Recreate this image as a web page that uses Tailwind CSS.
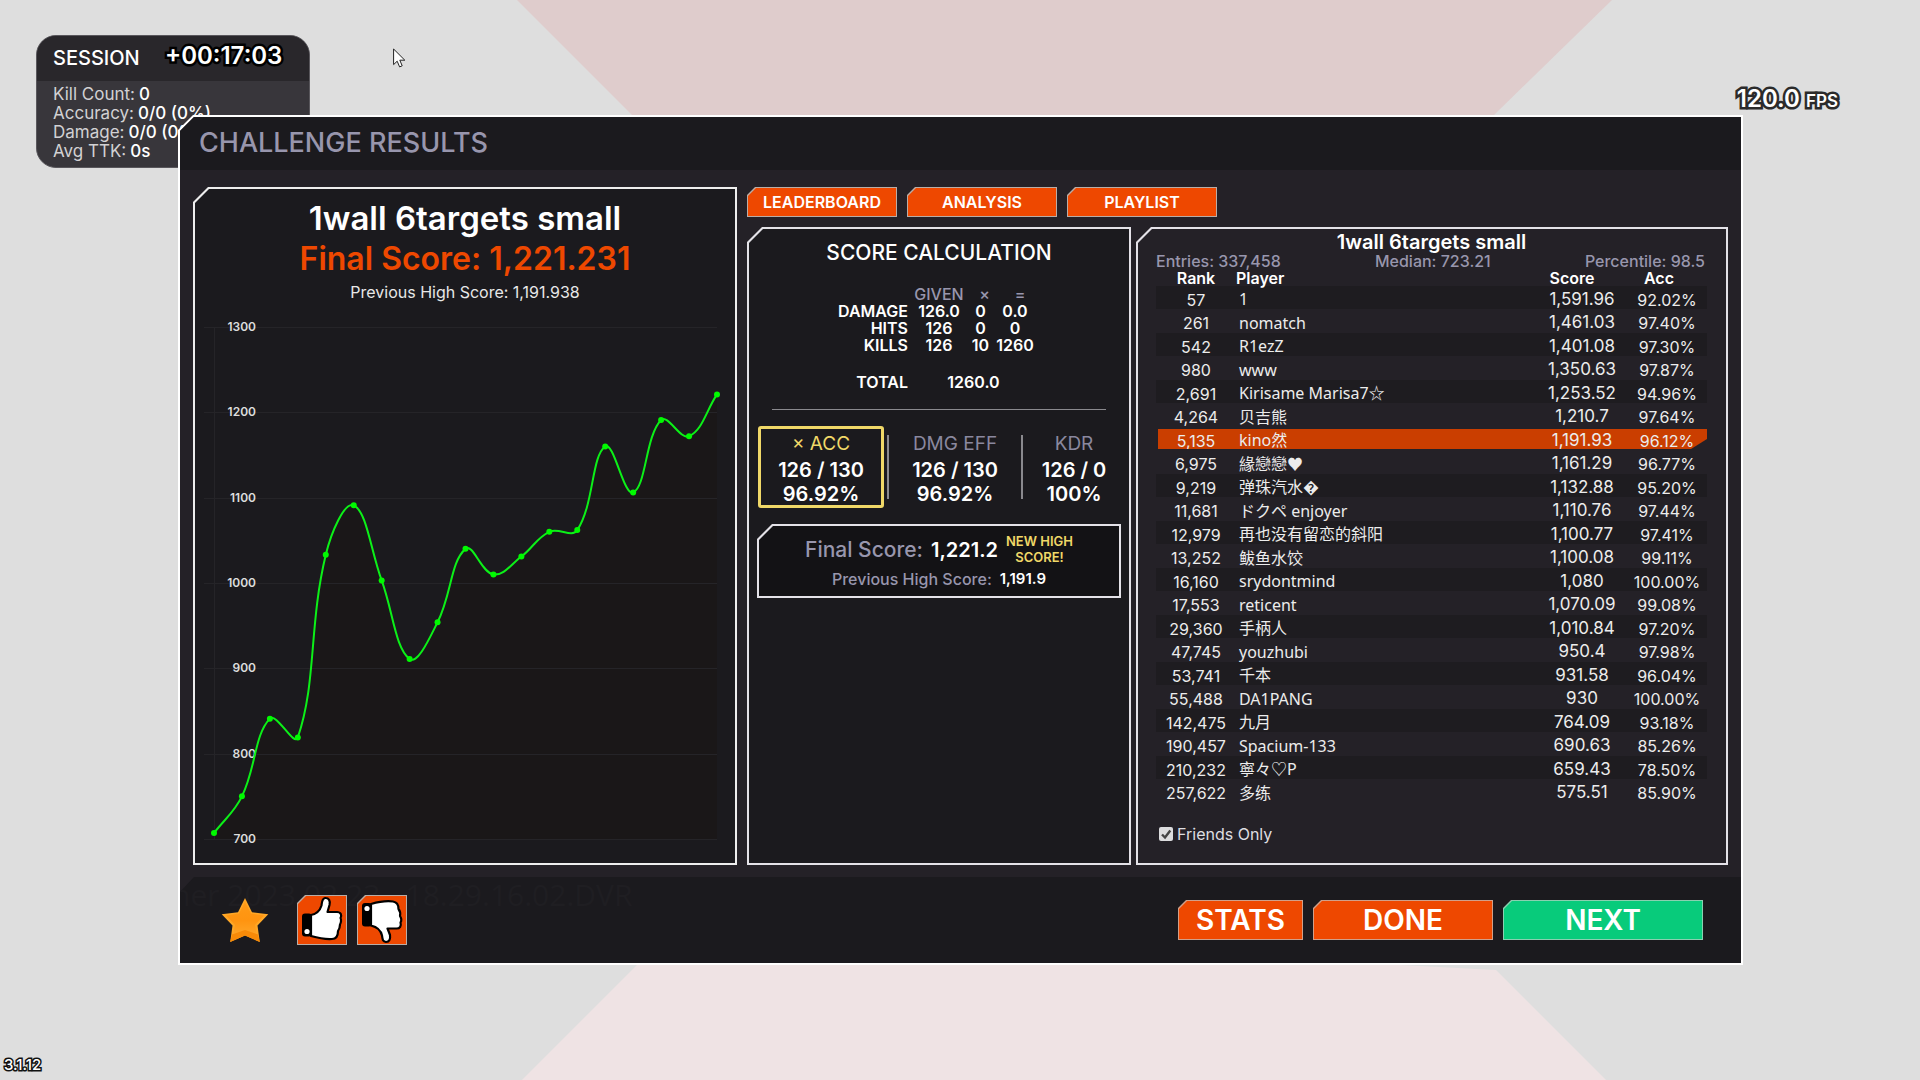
<!DOCTYPE html>
<html lang="en">
<head>
<meta charset="utf-8">
<title>Challenge Results</title>
<script src="https://cdn.jsdelivr.net/npm/@tailwindcss/browser@4"></script>
</head>
<body class="relative min-h-screen overflow-hidden bg-[#dedede] font-['Inter','Noto_Sans_CJK_SC',sans-serif] text-white">

<!-- arena backdrop -->
<svg class="absolute inset-0 h-full w-full" viewBox="0 0 1920 1080" preserveAspectRatio="none" aria-hidden="true">
  <path d="M517 0H1612L1494 115V200H632V115Z" fill="#dfcccc"/>
  <path d="M637 965V900H1400V965L1496 970L1606 1080H522Z" fill="#efe3e4"/>
</svg>

<!-- session HUD -->
<section class="absolute left-9 top-[35px] h-[133px] w-[274px] overflow-hidden rounded-[20px] border border-[#59575c] bg-[#38363b]">
  <header class="flex h-[45px] items-center bg-[#29272b] pb-0.5 pl-4">
    <h2 class="w-[112px] text-[20px] font-medium leading-6">SESSION</h2>
    <time class="pb-1 text-[24px] font-semibold leading-6 [-webkit-text-stroke:5px_#000] [paint-order:stroke_fill]">+00:17:03</time>
  </header>
  <dl class="pl-4 pt-1 text-[17px] leading-[19px] text-[#d2d1d3]">
    <div class="flex gap-1"><dt>Kill Count:</dt><dd class="font-medium text-white">0</dd></div>
    <div class="flex gap-1"><dt>Accuracy:</dt><dd class="font-medium text-white">0/0 (0%)</dd></div>
    <div class="flex gap-1"><dt>Damage:</dt><dd class="font-medium text-white">0/0 (0%)</dd></div>
    <div class="flex gap-1"><dt>Avg TTK:</dt><dd class="font-medium text-white">0s</dd></div>
  </dl>
</section>

<!-- mouse pointer -->
<svg class="absolute left-[393px] top-12 h-5 w-[13px]" viewBox="0 0 13 20" aria-hidden="true">
  <path d="M.6 1V16.6L4.2 13.2L6.6 18.9L9.2 17.8L6.8 12.2H11.8Z" fill="#fff" stroke="#222" stroke-width="1"/>
</svg>

<p class="absolute right-[82px] top-[87px] text-[24px] font-semibold leading-6 [-webkit-text-stroke:5px_#2b2b2b] [paint-order:stroke_fill]">120.0 <span class="text-[17px]">FPS</span></p>
<p class="absolute bottom-[5px] left-1 text-[15px] font-medium leading-5 [-webkit-text-stroke:3px_#111] [paint-order:stroke_fill]">3.1.12</p>

<!-- results dialog -->
<div class="relative pl-[178px] pr-[177px] pt-[115px]">
<main class="bg-white p-0.5 [clip-path:polygon(15px_0,100%_0,100%_100%,0_100%,0_15px)]">
<div class="bg-[#242127] [clip-path:polygon(14px_0,100%_0,100%_100%,0_100%,0_14px)]">
  <header class="flex h-[53px] items-center bg-[#1b1a1e] pb-px pl-[19px]">
    <h1 class="text-[27px] font-medium leading-[30px] text-[#9896ad]">CHALLENGE RESULTS</h1>
  </header>

  <div class="grid grid-cols-[544fr_981fr] gap-2.5 px-[13px] pb-3 pt-[17px]">

    <!-- score history -->
    <section class="bg-[#eeeeee] p-0.5 [clip-path:polygon(15px_0,100%_0,100%_100%,0_100%,0_15px)]">
      <div class="h-full bg-[#1b1a1e] pt-[9px] text-center [clip-path:polygon(14px_0,100%_0,100%_100%,0_100%,0_14px)]">
        <h2 class="text-[33px] font-semibold leading-10">1wall 6targets small</h2>
        <p class="text-[32px] font-semibold leading-[42px] text-[#ee4800]">Final Score: 1,221.231</p>
        <p class="text-[16px] leading-6 text-[#e8e8e8]">Previous High Score: 1,191.938</p>
        <svg id="chart" class="block w-full" viewBox="0 0 540 559" role="img" aria-label="Score history"></svg>
      </div>
    </section>

    <div class="flex flex-col gap-2.5">
      <nav class="flex gap-2.5">
        <button class="h-[30px] w-[150px] bg-[#b9ada6] p-px [clip-path:polygon(8px_0,100%_0,100%_100%,0_100%,0_8px)]"><span class="flex h-full items-center justify-center bg-[#ee4800] text-[16px] font-semibold [clip-path:polygon(8px_0,100%_0,100%_100%,0_100%,0_8px)]">LEADERBOARD</span></button>
        <button class="h-[30px] w-[150px] bg-[#b9ada6] p-px [clip-path:polygon(8px_0,100%_0,100%_100%,0_100%,0_8px)]"><span class="flex h-full items-center justify-center bg-[#ee4800] text-[16px] font-semibold [clip-path:polygon(8px_0,100%_0,100%_100%,0_100%,0_8px)]">ANALYSIS</span></button>
        <button class="h-[30px] w-[150px] bg-[#b9ada6] p-px [clip-path:polygon(8px_0,100%_0,100%_100%,0_100%,0_8px)]"><span class="flex h-full items-center justify-center bg-[#ee4800] text-[16px] font-semibold [clip-path:polygon(8px_0,100%_0,100%_100%,0_100%,0_8px)]">PLAYLIST</span></button>
      </nav>

      <div class="grid grow grid-cols-[384fr_592fr] gap-[5px]">

        <!-- score calculation -->
        <section class="bg-[#e4e2e8] p-0.5 [clip-path:polygon(15px_0,100%_0,100%_100%,0_100%,0_15px)]">
          <div class="h-full bg-[#1b1a1e] pt-[11px] [clip-path:polygon(14px_0,100%_0,100%_100%,0_100%,0_14px)]">
            <h2 class="text-center text-[21px] font-medium leading-[26px]">SCORE CALCULATION</h2>
            <table class="ml-[79px] mt-5 table-fixed text-center text-[16px] font-semibold leading-[17px]">
              <colgroup><col class="w-20"><col class="w-[62px]"><col class="w-[21px]"><col class="w-12"></colgroup>
              <thead>
                <tr class="text-[#9896ad]"><td></td><th class="font-medium">GIVEN</th><th class="pl-2 font-medium">×</th><th class="pl-2.5 font-medium">=</th></tr>
              </thead>
              <tbody>
                <tr><th class="text-right font-semibold">DAMAGE</th><td>126.0</td><td>0</td><td>0.0</td></tr>
                <tr><th class="text-right font-semibold">HITS</th><td>126</td><td>0</td><td>0</td></tr>
                <tr><th class="text-right font-semibold">KILLS</th><td>126</td><td>10</td><td>1260</td></tr>
              </tbody>
              <tfoot>
                <tr><th class="pt-5 text-right font-semibold">TOTAL</th><td colspan="3" class="pt-5">1260.0</td></tr>
              </tfoot>
            </table>
            <hr class="mx-[23px] mt-[18px] border-[#8a898e]">

            <div class="mt-4 flex items-center pl-[9px] pr-1 text-center text-[20px] font-semibold leading-6">
              <div class="h-[82px] w-[126px] rounded-[3px] border-[3px] border-[#f0d868] pt-[3px]">
                <h3 class="mb-0.5 text-[19px] font-normal text-[#f0d868]">× ACC</h3><p>126 / 130</p><p>96.92%</p>
              </div>
              <div class="ml-[3px] h-16 w-0.5 bg-[#8a898e]"></div>
              <div class="h-[82px] w-[132px] pt-1.5">
                <h3 class="mb-0.5 text-[19px] font-normal text-[#8a889f]">DMG EFF</h3><p>126 / 130</p><p>96.92%</p>
              </div>
              <div class="h-16 w-0.5 bg-[#8a898e]"></div>
              <div class="h-[82px] grow pt-1.5">
                <h3 class="mb-0.5 text-[19px] font-normal text-[#8a889f]">KDR</h3><p>126 / 0</p><p>100%</p>
              </div>
            </div>

            <div class="mx-2 mt-4 bg-[#e4e2e8] p-0.5 [clip-path:polygon(15px_0,100%_0,100%_100%,0_100%,0_15px)]">
              <div class="bg-[#131215] pb-[7px] pt-[7px] [clip-path:polygon(14px_0,100%_0,100%_100%,0_100%,0_14px)]">
                <div class="flex items-center justify-center gap-2">
                  <span class="text-[21px] font-medium text-[#9896ad]">Final Score:</span>
                  <span class="text-[20px] font-semibold">1,221.2</span>
                  <span class="pb-0.5 text-center text-[13px] font-semibold leading-4 text-[#f0d868]">NEW HIGH<br>SCORE!</span>
                </div>
                <div class="mt-0.5 flex items-center justify-center gap-2 text-[16px] leading-5">
                  <span class="font-medium text-[#9896ad]">Previous High Score:</span>
                  <span class="text-[15px] font-semibold">1,191.9</span>
                </div>
              </div>
            </div>
          </div>
        </section>

        <!-- leaderboard -->
        <section class="bg-[#e4e2e8] p-0.5 [clip-path:polygon(15px_0,100%_0,100%_100%,0_100%,0_15px)]">
          <div class="h-full bg-[#242127] pl-[18px] pr-[19px] [clip-path:polygon(14px_0,100%_0,100%_100%,0_100%,0_14px)]">
            <h2 class="pt-px text-center text-[20px] font-semibold leading-[25px]">1wall 6targets small</h2>
            <div class="flex justify-between pb-[3px] pr-0.5 text-[16px] font-medium leading-[12px] text-[#9896ad]">
              <span>Entries: 337,458</span><span>Median: 723.21</span><span>Percentile: 98.5</span>
            </div>
            <table class="w-full table-fixed text-center text-[16px] leading-[17px] text-[#ececec]">
              <colgroup><col class="w-20"><col><col class="w-[90px]"><col class="w-20"></colgroup>
              <thead>
                <tr class="h-4 leading-4 text-white"><th class="font-semibold">Rank</th><th class="text-left font-semibold">Player</th><th class="pr-5 font-semibold">Score</th><th class="pr-4 font-semibold">Acc</th></tr>
              </thead>
              <tbody id="rows"></tbody>
            </table>
            <label class="mt-[21px] flex items-center gap-1 pb-[18px] pl-[3px] text-[16px] leading-5 text-[#dedee0]">
              <span class="relative h-3.5 w-3.5">
                <input type="checkbox" checked class="peer block h-3.5 w-3.5 appearance-none rounded-[2px] bg-[#dcdcde]">
                <svg class="pointer-events-none absolute inset-0 hidden peer-checked:block" viewBox="0 0 14 14" aria-hidden="true"><path d="M3 7.500L6 10.500L11.300 3.500" fill="none" stroke="#444" stroke-width="2.400"/></svg>
              </span>
              Friends Only
            </label>
          </div>
        </section>
      </div>
    </div>
  </div>

  <footer class="relative flex h-[86px] items-center bg-[#1b1a1e] pl-[41px] pr-[38px] [clip-path:polygon(14px_0,100%_0,100%_100%,0_100%,0_15px)]">
    <p class="absolute -left-2 -top-1 whitespace-nowrap font-['Open_Sans',sans-serif] text-[30px] leading-[44px] text-[#1f1e22]" aria-hidden="true">ner 2023.02.23 - 18.29.16.02.DVR</p>
    <button class="relative h-[46px] w-[48px]" aria-label="Favourite">
      <svg viewBox="0 0 48 46" class="h-full w-full">
        <defs><linearGradient id="gold" x1="0" y1="0" x2="0" y2="1"><stop offset="0" stop-color="#ff9a16"/><stop offset=".5" stop-color="#ff9410"/><stop offset="1" stop-color="#ffa92c"/></linearGradient></defs>
        <path d="M24 1L31 15.200L47.300 17.200L36.500 28.500L38.800 45L24 38.500L9.200 45L11.500 28.500L.7 17.200L17 15.200Z" fill="#ffa726"/>
        <path d="M24 5L30 16.500L43 18.500L34 28L37 42L24 35.500L11 42L14 28L5 18.500L18 16.500Z" fill="url(#gold)"/>
        <path d="M9.200 45L11 37.500L24 33L37 37.500L38.800 45L24 38.500Z" fill="#f88a08"/>
      </svg>
    </button>
    <div class="relative ml-7 flex gap-2.5">
      <button aria-label="Like" class="h-[50px] w-[50px] bg-[#b9ada6] p-px [clip-path:polygon(8px_0,100%_0,100%_100%,0_100%,0_8px)]"><span class="block h-full bg-[#ee4800] [clip-path:polygon(8px_0,100%_0,100%_100%,0_100%,0_8px)]">
        <svg viewBox="0 0 48 48" class="h-12 w-12">
          <path d="M13 19C18 18 22 14.500 23.500 9.500C24 6 24 2.500 27 2C31 1.800 32.500 5 31.500 9L29.500 16H39C43 16 44 19.500 42.500 22C43.500 23.500 43 27 42 28.500C42 31 41 33.500 40 35C40 40 38.500 43 34 43C27 43.500 20 42 13 40Z" fill="#fff" stroke="#000" stroke-width="2.200" stroke-linejoin="round"/>
          <rect x="4" y="17.500" width="10" height="23" rx="3" fill="#000"/><circle cx="9" cy="35.500" r="2.600" fill="#fff"/>
        </svg></span></button>
      <button aria-label="Dislike" class="h-[50px] w-[50px] bg-[#b9ada6] p-px [clip-path:polygon(8px_0,100%_0,100%_100%,0_100%,0_8px)]"><span class="block h-full bg-[#ee4800] [clip-path:polygon(8px_0,100%_0,100%_100%,0_100%,0_8px)]">
        <svg viewBox="0 0 48 48" class="h-12 w-12">
          <path d="M13 8C20 6 28 4.500 35 5.500C38.500 6 40.500 9 40.500 13C42 15 42.500 18 42 20C43.500 22.500 43.500 25 42.500 26.500C43.500 30 42 32.500 38.500 32.500H29.500L32 39C32.500 43 31.500 46 28 46C24.500 45.500 24.500 43 24 39.500C23 35 19 31 13 29.500Z" fill="#fff" stroke="#000" stroke-width="2.200" stroke-linejoin="round"/>
          <rect x="4" y="7" width="10" height="23.500" rx="3" fill="#000"/><circle cx="9" cy="12.500" r="2.600" fill="#fff"/>
        </svg></span></button>
    </div>
    <div class="relative ml-auto flex gap-2.5 text-[28px] font-semibold leading-8">
      <button class="h-10 w-[125px] bg-[#d0a08a] p-px [clip-path:polygon(8px_0,100%_0,100%_100%,0_100%,0_8px)]"><span class="flex h-full items-center justify-center bg-[#ee4800] [clip-path:polygon(8px_0,100%_0,100%_100%,0_100%,0_8px)]">STATS</span></button>
      <button class="h-10 w-[180px] bg-[#d0a08a] p-px [clip-path:polygon(8px_0,100%_0,100%_100%,0_100%,0_8px)]"><span class="flex h-full items-center justify-center bg-[#ee4800] [clip-path:polygon(8px_0,100%_0,100%_100%,0_100%,0_8px)]">DONE</span></button>
      <button class="h-10 w-[200px] bg-[#8ad0b0] p-px [clip-path:polygon(8px_0,100%_0,100%_100%,0_100%,0_8px)]"><span class="flex h-full items-center justify-center bg-[#08cb7b] [clip-path:polygon(8px_0,100%_0,100%_100%,0_100%,0_8px)]">NEXT</span></button>
    </div>
  </footer>
</div>
</main>
</div>

<script>
  const players = [
    ['57','1','1,591.96','92.02%'],['261','nomatch','1,461.03','97.40%'],['542','R1ezZ','1,401.08','97.30%'],
    ['980','www','1,350.63','97.87%'],['2,691','Kirisame Marisa7☆','1,253.52','94.96%'],['4,264','贝吉熊','1,210.7','97.64%'],
    ['5,135','kino然','1,191.93','96.12%'],['6,975','緣戀戀♥','1,161.29','96.77%'],['9,219','弹珠汽水\uFFFD','1,132.88','95.20%'],
    ['11,681','ドクペ enjoyer','1,110.76','97.44%'],['12,979','再也没有留恋的斜阳','1,100.77','97.41%'],['13,252','鲅鱼水饺','1,100.08','99.11%'],
    ['16,160','srydontmind','1,080','100.00%'],['17,553','reticent','1,070.09','99.08%'],['29,360','手柄人','1,010.84','97.20%'],
    ['47,745','youzhubi','950.4','97.98%'],['53,741','千本','931.58','96.04%'],['55,488','DA1PANG','930','100.00%'],
    ['142,475','九月','764.09','93.18%'],['190,457','Spacium-133','690.63','85.26%'],['210,232','寧々♡P','659.43','78.50%'],
    ['257,622','多练','575.51','85.90%']
  ];
  const self = 6;
  document.getElementById('rows').innerHTML = players.map(([rank, name, score, acc], i) => {
    const row = i === self
      ? 'h-[23px] bg-[#ca3e00] [clip-path:polygon(2px_2px,100%_2px,100%_12px,535px_22px,2px_22px)]'
      : i % 2 ? 'h-6' : 'h-[23px] bg-[#1e1c20]';
    return `<tr class="${row}"><td class="pt-[5px]">${rank}</td><td class="whitespace-nowrap pl-[3px] pt-1 text-left font-['Noto_Sans','Noto_Sans_CJK_SC',sans-serif]">${name}</td><td class="pt-[3px] text-[17px]">${score}</td><td class="pt-[5px]">${acc}</td></tr>`;
  }).join('');

  // score history: smooth line through one point per run
  const scores = [707,750,841,819,1033,1091,1003,911,954,1040,1010,1031,1060,1062,1160,1106,1191,1172,1221];
  const yOf = v => 23 + (1300 - v) * 512 / 600;
  const pts = scores.map((v, i) => [19 + i * 503 / 18, yOf(v)]);
  const ctrl = pts.map((p, i) => {
    const a = pts[i - 1] || p, b = pts[i + 1] || p;
    const da = Math.hypot(p[0] - a[0], p[1] - a[1]), db = Math.hypot(b[0] - p[0], b[1] - p[1]);
    const fa = 0.4 * da / (da + db), fb = 0.4 * db / (da + db);
    return [[p[0] - fa * (b[0] - a[0]), p[1] - fa * (b[1] - a[1])], [p[0] + fb * (b[0] - a[0]), p[1] + fb * (b[1] - a[1])]];
  });
  const line = 'M' + pts[0] + pts.slice(1).map((p, i) => `C${ctrl[i][1]} ${ctrl[i + 1][0]} ${p}`).join('');
  let svg = `<path d="${line}V535H19Z" fill="#1a1718"/><path d="M19.500 23V535" stroke="#252428"/>`;
  for (let v = 1300; v >= 700; v -= 100) {
    const y = Math.round(yOf(v));
    svg += `<path d="M9 ${y + .5}H522" stroke="#252428"/><text x="61" y="${y + 4}" text-anchor="end" font-size="12" font-weight="600" fill="#dddddd">${v}</text>`;
  }
  svg += `<path d="${line}" fill="none" stroke="#0cf018" stroke-width="2"/>` + pts.map(p => `<circle cx="${p[0]}" cy="${p[1]}" r="3" fill="#00fa00"/>`).join('');
  document.getElementById('chart').innerHTML = svg;
</script>
</body>
</html>
